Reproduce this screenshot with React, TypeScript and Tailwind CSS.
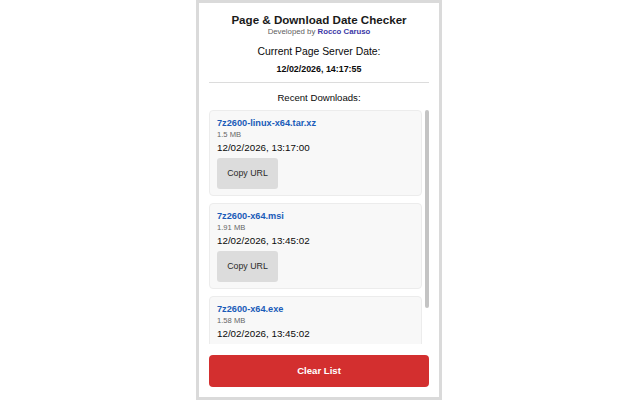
import React from "react";

type Download = {
  name: string;
  size: string;
  date: string;
};

const downloads: Download[] = [
  { name: "7z2600-linux-x64.tar.xz", size: "1.5 MB", date: "12/02/2026, 13:17:00" },
  { name: "7z2600-x64.msi", size: "1.91 MB", date: "12/02/2026, 13:45:02" },
  { name: "7z2600-x64.exe", size: "1.58 MB", date: "12/02/2026, 13:45:02" },
];

function DownloadCard({ item }: { item: Download }) {
  return (
    <div className="shrink-0 rounded-[4px] border border-[#ececec] bg-[#f8f8f8] px-[7px] pt-[6px] pb-[6px]">
      <div className="text-[9.2px] leading-[12px] font-bold text-[#1a5cb8]">{item.name}</div>
      <div className="mt-[1px] text-[7.6px] leading-[10px] text-[#666]">{item.size}</div>
      <div className="mt-[2px] text-[9.8px] leading-[12px] text-[#0a0a0a]">{item.date}</div>
      <button className="mt-[4px] flex h-[31px] w-[61px] items-center justify-center rounded-[3px] bg-[#dcdcdc] text-[8.8px] text-[#2a2a2a]">
        Copy URL
      </button>
    </div>
  );
}

export default function App() {
  return (
    <div
      className="flex h-[400px] w-full justify-center bg-white pr-[2px]"
      style={{ fontFamily: '"Liberation Sans", Arial, sans-serif' }}
    >
      <div className="flex h-[400px] w-[246px] flex-col border-[3px] border-[#dadada] bg-white px-[10px] pt-[10px] pb-[10px]">
        <div className="text-center">
          <h1 className="text-[11.6px] leading-[14px] font-bold text-[#1a1a1a]">Page &amp; Download Date Checker</h1>
          <div className="text-[7.8px] leading-[10px] text-[#5e5e5e]">
            Developed by <span className="font-bold text-[#3b37a6]">Rocco Caruso</span>
          </div>
          <div className="mt-[8px] text-[10.4px] leading-[14px] text-[#0a0a0a]">Current Page Server Date:</div>
          <div className="mt-[4px] text-[8.9px] leading-[12px] font-bold text-[#0a0a0a]">12/02/2026, 14:17:55</div>
        </div>

        <div className="mt-[7px] h-[1px] bg-[#dcdcdc]" />

        <div className="mt-[9px] text-center text-[9.6px] leading-[12px] text-[#0a0a0a]">Recent Downloads:</div>

        <div className="mt-[6px] flex h-[234px] gap-[3px]">
          <div className="flex min-w-0 flex-1 flex-col gap-[7px] overflow-hidden">
            {downloads.map((d) => (
              <DownloadCard key={d.name} item={d} />
            ))}
          </div>
          <div className="w-[4px] shrink-0">
            <div className="h-[198px] w-[4px] rounded-[2px] bg-[#c4c4c4]" />
          </div>
        </div>

        <button className="mt-[11px] flex h-[32px] w-full items-center justify-center rounded-[4px] bg-[#d32f2f] text-[9.6px] font-bold text-white">
          Clear List
        </button>
      </div>
    </div>
  );
}
